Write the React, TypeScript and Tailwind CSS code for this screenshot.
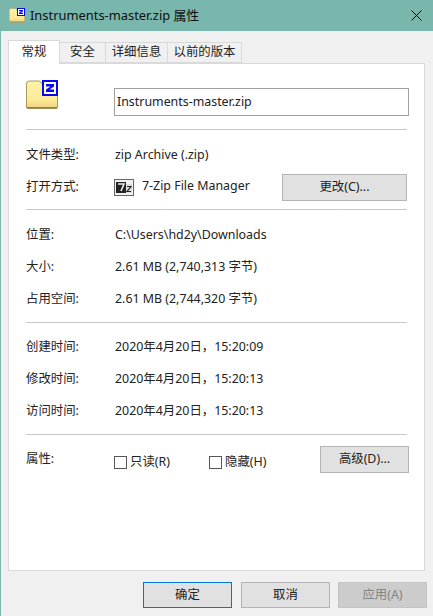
const FONT = "font-['Noto_Sans','Noto_Sans_CJK_SC',sans-serif]";

function ZipIcon({ size = 32, id }: { size?: number; id: string }) {
  return (
    <svg width={size} height={size} viewBox="0 0 32 32" className="shrink-0">
      <defs>
        <linearGradient id={id} x1="0" y1="0" x2="0" y2="1">
          <stop offset="0" stopColor="#fdf3ac" />
          <stop offset="0.7" stopColor="#fbe996" />
          <stop offset="1" stopColor="#eccf7e" />
        </linearGradient>
      </defs>
      <path d="M.5 4 Q.5 1 3 1 H13 Q15 1 16 4 H30 Q31.5 4 31.5 6 V27 Q31.5 28.5 30 28.5 H2 Q.5 28.5 .5 27 Z" fill={`url(#${id})`} stroke="#a89a5c" strokeWidth="1" />
      <path d="M1 27 H31 V28.5 H1 Z" fill="#8f8450" />
      <rect x="16" y="0" width="16" height="16" fill="#0808f0" />
      <rect x="18" y="2" width="12" height="12" fill="#fff" />
      <path d="M20 4 H28 V6.5 L23.5 9.5 H28 V12 H20 V9.5 L24.5 6.5 H20 Z" fill="#0808f0" />
    </svg>
  );
}

function Row({ label, value }: { label: string; value: string }) {
  return (
    <div className="flex h-8 items-center">
      <div className="w-[88px] shrink-0">{label}</div>
      <div className="pl-px">{value}</div>
    </div>
  );
}

function Line() {
  return <div className="h-px shrink-0 bg-[#c8c8c8]" />;
}

function Btn({ children, className = "" }: { children: React.ReactNode; className?: string }) {
  return <div className={`flex items-center justify-center ${className}`}>{children}</div>;
}

function Check({ label, className = "" }: { label: string; className?: string }) {
  return (
    <div className={`flex items-center gap-[3px] ${className}`}>
      <div className="h-[13px] w-[13px] border border-[#555] bg-white" />
      <span>{label}</span>
    </div>
  );
}

export default function App() {
  return (
    <div className={`${FONT} flex h-[616px] w-[433px] flex-col overflow-hidden border-l border-[#79b6ac] bg-[#f0f0f0] text-[12.4px] leading-none text-[#222]`}>
      <div className="-ml-px flex h-[31px] shrink-0 items-center bg-[#79b6ac] pr-[11px] pl-[9px] text-[12.9px] text-[#101010]">
        <ZipIcon size={16} id="small" />
        <span className="ml-[5px] flex-1">Instruments-master.zip 属性</span>
        <svg width="11" height="11" viewBox="0 0 11 11"><path d="M.5.5l10 10M10.5.5l-10 10" stroke="#000" strokeWidth="1" /></svg>
      </div>

      <div className="flex h-[32px] shrink-0 items-end pl-[7px]">
        <div className="z-10 -mb-px flex h-[24px] w-[52px] items-center justify-center border border-b-0 border-[#d9d9d9] bg-white pb-px">常规</div>
        <div className="flex h-[21px] w-[46px] items-center justify-center border border-l-0 border-[#d9d9d9] bg-[#f0f0f0]">安全</div>
        <div className="flex h-[21px] w-[62px] items-center justify-center border border-l-0 border-[#d9d9d9] bg-[#f0f0f0]">详细信息</div>
        <div className="flex h-[21px] w-[74px] items-center justify-center border border-l-0 border-[#d9d9d9] bg-[#f0f0f0]">以前的版本</div>
      </div>

      <div className="ml-[7px] mr-2 flex h-[508px] shrink-0 flex-col border border-[#d9d9d9] bg-white px-[17px]">
        <div className="flex h-[65px] shrink-0 pt-[16px]">
          <div className="w-[88px] shrink-0"><ZipIcon id="large" /></div>
          <div className="mt-[8px] -mr-0.5 flex h-[28px] flex-1 items-center border border-[#a0a0a0] pl-0.5">Instruments-master.zip</div>
        </div>
        <Line />
        <div className="flex flex-col pt-[9px] pb-[6px]">
          <Row label="文件类型:" value="zip Archive (.zip)" />
          <div className="flex h-8 items-center">
            <div className="w-[88px] shrink-0">打开方式:</div>
            <svg width="20" height="17" viewBox="0 0 20 17" className="shrink-0">
              <rect x=".5" y=".5" width="19" height="16" fill="#f2f2f2" stroke="#666" />
              <rect x="2" y="3" width="10" height="11" fill="#222" />
              <rect x="12" y="5" width="6" height="9" fill="#ddd" />
              <path d="M4 5 H10 L7 12" fill="none" stroke="#eee" strokeWidth="1.6" />
              <path d="M13 7.5 H17 L13 12.5 H17" fill="none" stroke="#222" strokeWidth="1.2" />
            </svg>
            <span className="ml-2 -mt-0.5 flex-1">7-Zip File Manager</span>
            <Btn className="h-[27px] w-[125px] border border-[#b4b4b4] bg-[#e1e1e1]">更改(C)...</Btn>
          </div>
        </div>
        <Line />
        <div className="flex flex-col pt-[9px] pb-[7px]">
          <Row label="位置:" value="C:\Users\hd2y\Downloads" />
          <Row label="大小:" value="2.61 MB (2,740,313 字节)" />
          <Row label="占用空间:" value="2.61 MB (2,744,320 字节)" />
        </div>
        <Line />
        <div className="flex flex-col pt-[8px] pb-[7px]">
          <Row label="创建时间:" value="2020年4月20日，15:20:09" />
          <Row label="修改时间:" value="2020年4月20日，15:20:13" />
          <Row label="访问时间:" value="2020年4月20日，15:20:13" />
        </div>
        <Line />
        <div className="-mr-0.5 flex items-center pt-[11px]">
          <div className="-mt-px w-[88px] shrink-0">属性:</div>
          <Check label="只读(R)" className="w-[95px] pt-[5px]" />
          <Check label="隐藏(H)" className="flex-1 pt-[5px]" />
          <Btn className="h-[27px] w-[89px] border border-[#b4b4b4] bg-[#e1e1e1]">高级(D)...</Btn>
        </div>
      </div>

      <div className="flex justify-end pt-[11px] pr-[6px]">
        <Btn className="h-[26px] w-[89px] border-[1.5px] border-[#0078d7] bg-[#e1e1e1]">确定</Btn>
        <Btn className="ml-[9px] h-[26px] w-[89px] border border-[#b4b4b4] bg-[#e1e1e1]">取消</Btn>
        <Btn className="ml-2 h-[26px] w-[89px] border border-[#c4c4c4] bg-[#cccccc] text-[#838383]">应用(A)</Btn>
      </div>
    </div>
  );
}
